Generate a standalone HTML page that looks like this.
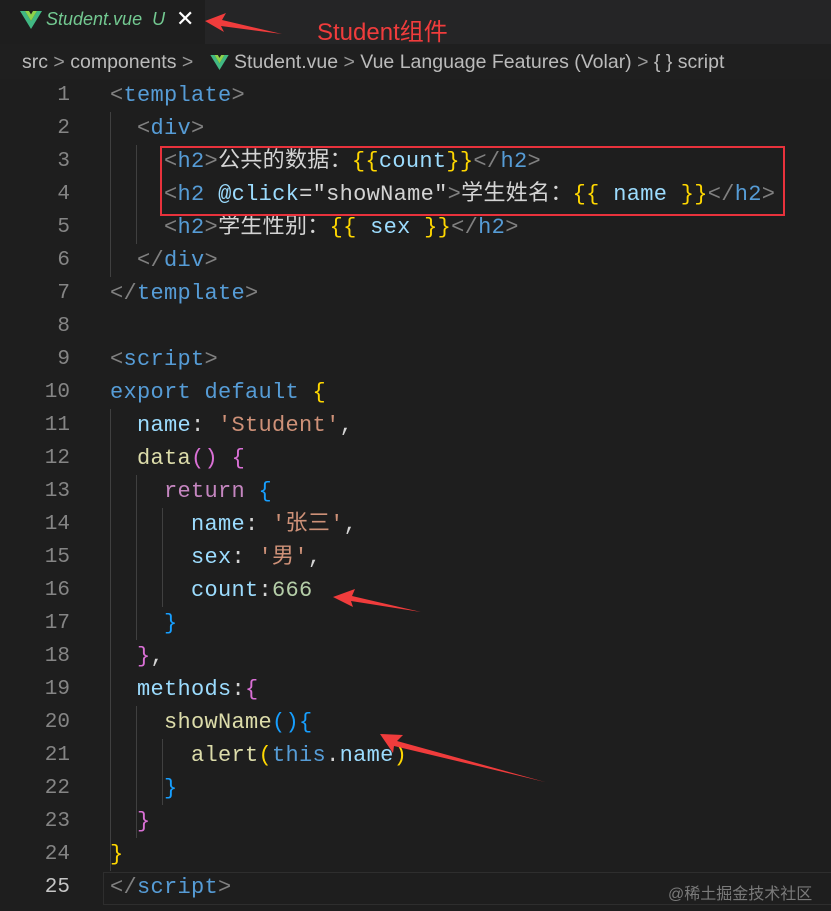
<!DOCTYPE html>
<html><head><meta charset="utf-8"><style>
*{margin:0;padding:0}
body{width:831px;height:911px;background:#1f1f1f;overflow:hidden;position:relative;font-family:"Liberation Sans","Noto Sans CJK SC",sans-serif}
.tabbar{position:absolute;left:0;top:0;width:831px;height:44px;background:#252526}
.tab{position:absolute;left:0;top:0;width:205px;height:44px;background:#1e1e1e}
.ln{position:absolute;left:0;width:70px;height:33px;line-height:33px;text-align:right;font:21px/33px "Liberation Mono",monospace;color:#858585}
.c{position:absolute;left:110px;height:33px;white-space:pre;font:22px/33px "Liberation Mono","Noto Sans CJK SC",monospace;letter-spacing:0.3px;color:#d4d4d4}
.g{color:#808080}.t{color:#569cd6}.a{color:#9cdcfe}.y{color:#ffd700}.s{color:#ce9178}.f{color:#dcdcaa}.n{color:#b5cea8}.p{color:#da70d6}.b{color:#179fff}.k{color:#c586c0}.w{color:#d4d4d4}
.guide{position:absolute;width:1px;background:#404040}
</style></head><body>
<div class="tabbar"><div class="tab"></div></div>
<svg style="position:absolute;left:20px;top:11px" width="22" height="18" viewBox="0 0 22 18"><path d="M0 0h5l6 10 6-10h5L11 18z" fill="#41b883"/><path d="M5 0h4l2 3.5L13 0h4l-6 10z" fill="#8ed34a"/></svg>
<div style="position:absolute;left:46px;top:9px;font-size:18px;font-style:italic;color:#73c991">Student.vue&nbsp; U</div>
<div style="position:absolute;left:176px;top:6px;font-size:22px;color:#fff">✕</div>
<div style="position:absolute;left:317px;top:12px;font-size:24px;color:#f03c3c">Student组件</div>
<div style="position:absolute;left:22px;top:51px;font-size:19.5px;color:#bbbbbb;white-space:pre">src <span style="color:#999">&gt;</span> components <span style="color:#999">&gt;</span></div>
<svg style="position:absolute;left:210px;top:55px" width="19" height="15" viewBox="0 0 22 18"><path d="M0 0h5l6 10 6-10h5L11 18z" fill="#41b883"/><path d="M5 0h4l2 3.5L13 0h4l-6 10z" fill="#8ed34a"/></svg>
<div style="position:absolute;left:234px;top:51px;font-size:19.5px;color:#bbbbbb;white-space:pre">Student.vue <span style="color:#999">&gt;</span> Vue Language Features (Volar) <span style="color:#999">&gt;</span> { } script</div>
<div style="position:absolute;left:0;top:79px;width:831px;height:832px;background:#1e1e1e"></div>
<div style="position:absolute;left:103px;top:872px;width:728px;height:31px;border:1px solid #2e2e2e;border-right:none"></div>
<div class="guide" style="left:110px;top:112px;height:165px"></div>
<div class="guide" style="left:136px;top:145px;height:99px"></div>
<div class="guide" style="left:110px;top:409px;height:462px"></div>
<div class="guide" style="left:136px;top:475px;height:165px"></div>
<div class="guide" style="left:162px;top:508px;height:99px"></div>
<div class="guide" style="left:136px;top:706px;height:132px"></div>
<div class="guide" style="left:162px;top:739px;height:66px"></div>
<div id="code"></div>
<script>
var L=[
'<span class="g">&lt;</span><span class="t">template</span><span class="g">&gt;</span>',
'  <span class="g">&lt;</span><span class="t">div</span><span class="g">&gt;</span>',
'    <span class="g">&lt;</span><span class="t">h2</span><span class="g">&gt;</span>公共的数据：<span class="y">{{</span><span class="a">count</span><span class="y">}}</span><span class="g">&lt;/</span><span class="t">h2</span><span class="g">&gt;</span>',
'    <span class="g">&lt;</span><span class="t">h2</span> <span class="a">@click</span>=<span class="w">"showName"</span><span class="g">&gt;</span>学生姓名：<span class="y">{{</span> <span class="a">name</span> <span class="y">}}</span><span class="g">&lt;/</span><span class="t">h2</span><span class="g">&gt;</span>',
'    <span class="g">&lt;</span><span class="t">h2</span><span class="g">&gt;</span>学生性别：<span class="y">{{</span> <span class="a">sex</span> <span class="y">}}</span><span class="g">&lt;/</span><span class="t">h2</span><span class="g">&gt;</span>',
'  <span class="g">&lt;/</span><span class="t">div</span><span class="g">&gt;</span>',
'<span class="g">&lt;/</span><span class="t">template</span><span class="g">&gt;</span>',
'',
'<span class="g">&lt;</span><span class="t">script</span><span class="g">&gt;</span>',
'<span class="t">export default</span> <span class="y">{</span>',
'  <span class="a">name</span>: <span class="s">\'Student\'</span>,',
'  <span class="f">data</span><span class="p">()</span> <span class="p">{</span>',
'    <span class="k">return</span> <span class="b">{</span>',
'      <span class="a">name</span>: <span class="s">\'张三\'</span>,',
'      <span class="a">sex</span>: <span class="s">\'男\'</span>,',
'      <span class="a">count</span>:<span class="n">666</span>',
'    <span class="b">}</span>',
'  <span class="p">}</span>,',
'  <span class="a">methods</span>:<span class="p">{</span>',
'    <span class="f">showName</span><span class="b">(){</span>',
'      <span class="f">alert</span><span class="y">(</span><span class="t">this</span>.<span class="a">name</span><span class="y">)</span>',
'    <span class="b">}</span>',
'  <span class="p">}</span>',
'<span class="y">}</span>',
'<span class="g">&lt;/</span><span class="t">script</span><span class="g">&gt;</span>'];
var h='';
for(var i=0;i<L.length;i++){var yy=79+33*i;
h+='<div class="ln" style="top:'+(yy)+'px;'+(i==24?'color:#c6c6c6':'')+'">'+(i+1)+'</div>';
h+='<div class="c" style="top:'+yy+'px">'+L[i]+'</div>';}
document.getElementById('code').innerHTML=h;
</script>
<div style="position:absolute;left:160px;top:146px;width:621px;height:66px;border:2px solid #e8323c"></div>
<svg style="position:absolute;left:0;top:0" width="831" height="911">
<polygon points="205,21 226,13 222,20 282,34 221,26 224,32" fill="#f03c3c"/>
<polygon points="333,597 355,589 352,596 421,612 351,601 353,607" fill="#f03c3c"/>
<polygon points="380,734 403,735 397,741 545,782 394,746 393,753" fill="#f03c3c"/>
</svg>
<div style="position:absolute;left:668px;top:880px;font-size:16px;color:#7a7a7a">@稀土掘金技术社区</div>
</body></html>
